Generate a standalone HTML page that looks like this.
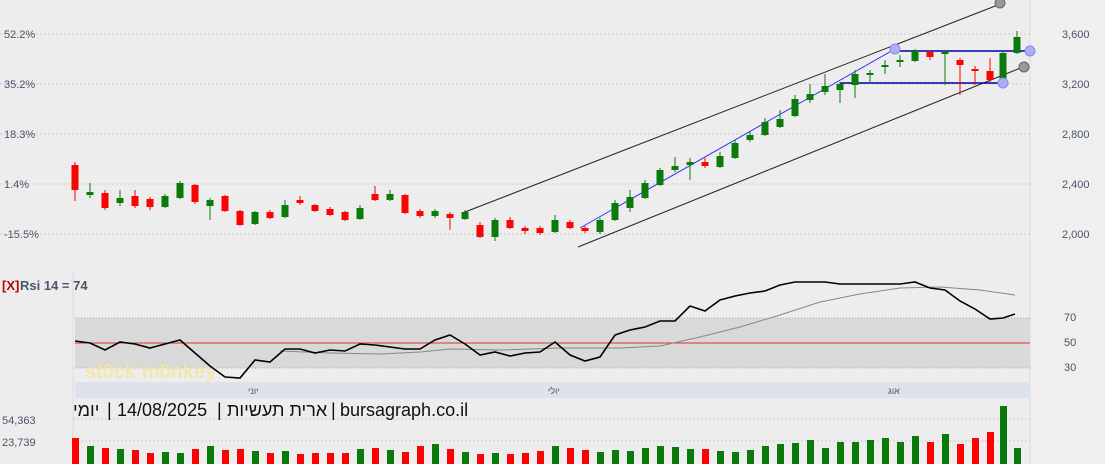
<!DOCTYPE html><html><head><meta charset="utf-8"><style>
body{margin:0;width:1105px;height:464px;overflow:hidden;background:#ededed;font-family:"Liberation Sans",sans-serif}
svg{position:absolute;left:0;top:0}
</style></head><body>
<svg width="1105" height="464" id="s" xmlns="http://www.w3.org/2000/svg">
<rect x="0" y="0" width="1105" height="464" fill="#ededed"/>
<rect x="1030" y="0" width="75" height="464" fill="#efefef"/>
<line x1="1030" y1="0" x2="1030" y2="464" stroke="#ddd"/>
<line x1="73" y1="270" x2="73" y2="464" stroke="#ddd"/>
<g stroke="#ccc" stroke-dasharray="2,2"><line x1="0" y1="34" x2="1030" y2="34"/><line x1="0" y1="84" x2="1030" y2="84"/><line x1="0" y1="134" x2="1030" y2="134"/><line x1="0" y1="184" x2="1030" y2="184"/><line x1="0" y1="234" x2="1030" y2="234"/>
<line x1="73" y1="419" x2="1030" y2="419"/><line x1="73" y1="441" x2="1030" y2="441"/></g>
<g font-size="11" fill="#4a5568"><text x="4" y="38">52.2%</text><text x="4" y="88">35.2%</text><text x="4" y="138">18.3%</text><text x="4" y="188">1.4%</text><text x="4" y="238">-15.5%</text>
<text x="1062" y="38">3,600</text><text x="1062" y="88">3,200</text><text x="1062" y="138">2,800</text><text x="1062" y="188">2,400</text><text x="1062" y="238">2,000</text>
<text x="1064" y="321">70</text><text x="1064" y="346">50</text><text x="1064" y="371">30</text>
<text x="2" y="424">54,363</text><text x="2" y="446">23,739</text></g>
<text x="2" y="290" font-size="13" font-weight="bold" fill="#b00">[X]</text><text x="20" y="290" font-size="13" font-weight="bold" fill="#4a5568">Rsi 14 = 74</text>
<rect x="75" y="318" width="955" height="50" fill="#d9d9d9"/>
<line x1="75" y1="318" x2="1030" y2="318" stroke="#aaa" stroke-dasharray="1,2"/><line x1="75" y1="368" x2="1030" y2="368" stroke="#aaa" stroke-dasharray="1,2"/>
<line x1="75" y1="343" x2="1030" y2="343" stroke="#d33"/>
<text x="85" y="378" font-size="20" font-weight="bold" fill="#f3e6a0" opacity="0.8">st0ck m0nkey</text>
<rect x="75" y="382" width="955" height="16" fill="#dde3ec"/>
<g font-size="9" fill="#555"><text x="248" y="394">יוני</text><text x="548" y="394">יולי</text><text x="888" y="394">אוג</text></g>
<g font-size="18" fill="#111">
<text x="73" y="416">יומי</text><text x="107" y="416">|</text><text x="117" y="416">14/08/2025</text><text x="217" y="416">|</text><text x="227" y="416">ארית תעשיות</text><text x="331" y="416">|</text><text x="340" y="416">bursagraph.co.il</text></g>
<polyline fill="none" stroke="#888" points="280,351 330,353 380,354 420,352 450,349 500,350 560,348 620,348 660,346 700,337 740,327 780,315 820,302 860,294 900,288 940,287 980,290 1015,295"/>
<polyline fill="none" stroke="#000" stroke-width="1.6" points="75,341 90,343 105,350 120,342 135,344 150,348 165,344 180,340 195,353 210,366 225,377 240,378 255,360 270,362 285,349 300,349 315,353 330,350 345,351 360,344 375,345 390,347 405,349 420,349 435,340 450,335 465,344 480,355 495,352 510,356 525,353 540,352 555,342 570,355 585,361 600,357 615,335 630,330 645,327 660,321 675,321 690,306 705,311 720,300 735,296 750,293 765,291 780,285 795,282 810,282 825,282 840,284 855,284 870,284 885,284 900,284 915,282 930,288 945,290 960,301 975,309 990,319 1003,318 1015,314"/>
<line x1="465" y1="212" x2="1003" y2="3" stroke="#222"/>
<line x1="578" y1="247" x2="1023" y2="67" stroke="#222"/>
<line x1="580" y1="228" x2="895" y2="49" stroke="#33f"/>
<line x1="895" y1="51" x2="1030" y2="51" stroke="#00a" stroke-width="1.5"/>
<line x1="840" y1="83" x2="1003" y2="83" stroke="#00a" stroke-width="1.5"/>
<g id="c"></g><g id="v"></g>
<g stroke-width="1"><circle cx="895" cy="49" r="5" fill="#aab0f0" stroke="#88f"/><circle cx="1030" cy="51" r="5" fill="#aab0f0" stroke="#88f"/><circle cx="1003" cy="83" r="5" fill="#aab0f0" stroke="#88f"/>
<circle cx="1000" cy="3" r="5" fill="#999" stroke="#666"/><circle cx="1024" cy="67" r="5" fill="#999" stroke="#666"/></g>
</svg>
<script>
var d=[[75,'r',165,190,162,201],[90,'g',192,195,183,198],[105,'r',193,208,190,210],[120,'g',198,203,190,206],[135,'r',196,206,190,208],[150,'r',199,207,197,210],[165,'g',196,207,194,208],[180,'g',183,198,181,199],[195,'r',185,202,184,204],[210,'g',200,206,198,220],[225,'r',196,211,195,212],[240,'r',211,225,210,226],[255,'g',212,224,211,225],[270,'r',212,218,210,219],[285,'g',205,217,200,218],[300,'r',200,203,196,205],[315,'r',205,211,204,212],[330,'r',209,215,207,216],[345,'r',212,220,211,221],[360,'g',208,219,205,220],[375,'r',194,200,186,201],[390,'g',194,200,190,201],[405,'r',195,213,194,214],[420,'r',211,216,209,218],[435,'g',211,216,209,218],[450,'r',214,218,212,230],[465,'g',212,219,210,220],[480,'r',225,237,222,238],[495,'g',220,237,218,241],[510,'r',220,228,217,229],[525,'r',228,231,226,234],[540,'r',228,233,226,235],[555,'g',220,232,215,233],[570,'r',222,228,220,229],[585,'r',228,231,226,233],[600,'g',220,232,218,234],[615,'g',203,220,200,221],[630,'g',197,208,190,212],[645,'g',183,198,180,199],[660,'g',170,185,168,186],[675,'g',166,170,157,172],[690,'g',162,165,158,180],[705,'r',162,166,158,168],[720,'g',156,167,152,168],[735,'g',143,158,140,159],[750,'g',135,140,131,142],[765,'g',122,135,118,136],[780,'g',119,127,110,128],[795,'g',99,116,95,117],[810,'g',94,100,84,103],[825,'g',86,92,74,95],[840,'g',84,90,82,103],[855,'g',74,85,70,98],[870,'g',73,75,70,84],[885,'g',65,67,60,74],[900,'g',60,62,55,67],[915,'g',51,61,49,62],[930,'r',52,57,50,60],[945,'g',52,54,50,85],[960,'r',60,65,58,95],[975,'r',69,71,66,85],[990,'r',71,80,58,82],[1003,'g',53,83,52,84],[1017,'g',37,53,31,54]];
var vh=[26,18,16,15,14,11,12,11,15,18,14,15,13,11,13,10,11,11,11,15,16,14,12,18,20,15,12,10,11,10,11,13,18,16,14,12,14,13,16,18,17,15,15,13,12,14,18,20,21,24,16,22,22,24,26,22,28,22,30,20,26,32,58,16,13,12,20,18];
var ns='http://www.w3.org/2000/svg',c=document.getElementById('c'),v=document.getElementById('v');
function el(p,t,a){var e=document.createElementNS(ns,t);for(var k in a)e.setAttribute(k,a[k]);p.appendChild(e);}
d.forEach(function(q,i){var col=q[1]=='g'?'#0a7a0a':'#f00';
el(c,'line',{x1:q[0],x2:q[0],y1:q[4],y2:q[5],stroke:col});
el(c,'rect',{x:q[0]-3.5,y:q[2],width:7,height:Math.max(2,q[3]-q[2]),fill:col});
var h=vh[i]||14;el(v,'rect',{x:q[0]-3,y:464-h,width:7,height:h,fill:col});});
</script>
</body></html>
